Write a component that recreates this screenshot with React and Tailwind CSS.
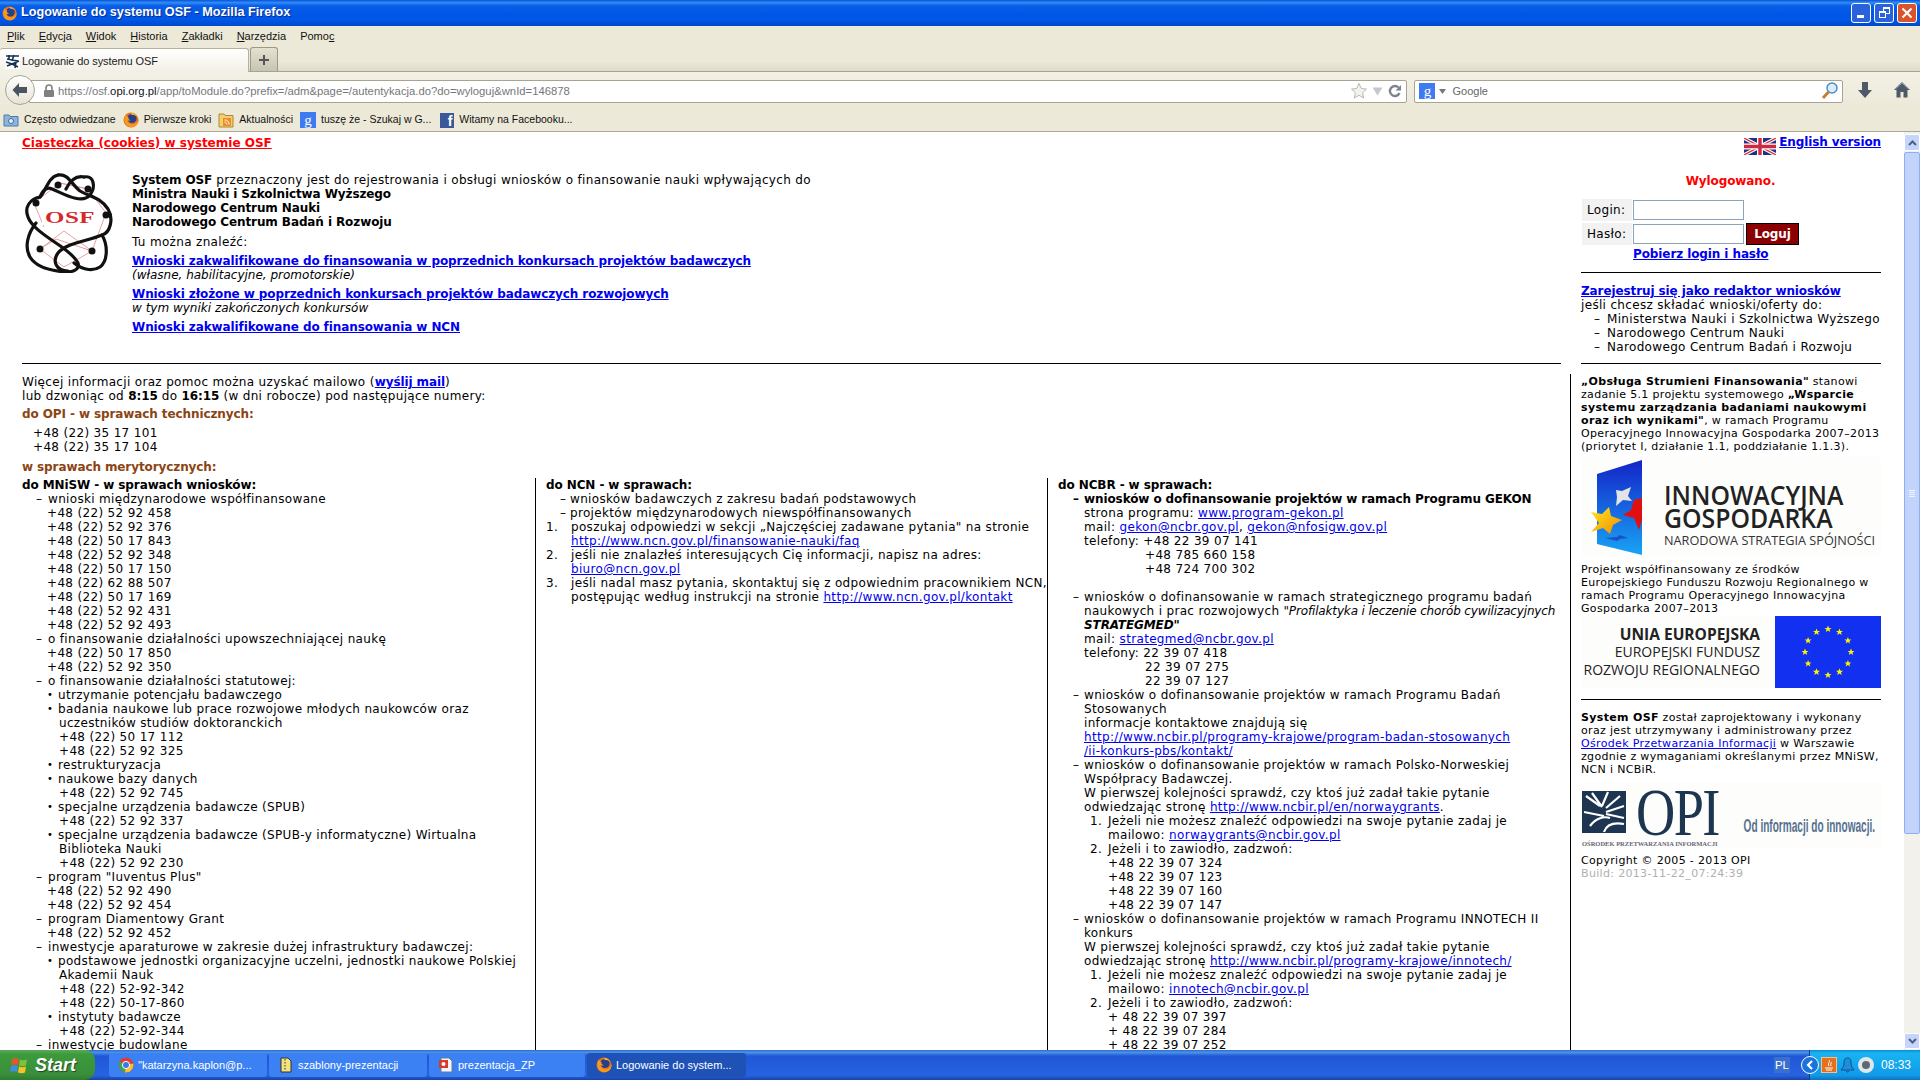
import React from 'react';

const Firefox = ({ size = 16 }) => (
  <svg width={size} height={size} viewBox="0 0 16 16" className="shrink-0">
    <circle cx="8" cy="8" r="7.5" fill="#e8701a" />
    <circle cx="9" cy="6.5" r="4.6" fill="#27408b" />
    <path d="M3 2.5C1 5 .8 9 2.5 12c2 3.3 7 4.2 10.3 1.8 2.4-1.8 3-4.4 2.7-6.8-.6 2.8-2.6 5-5.6 5.2C7 12.400 4.600 10.500 4.500 8c1 .8 2 .8 3 .3C6 7.500 5 6.500 5.500 5 4 4.800 3.300 3.800 3 2.500z" fill="#f59a1c" />
    <path d="M8 1c2.500 0 5 1.300 6.500 4-1.800-1.500-3.600-2.300-6-2.300z" fill="#f6c12b" />
  </svg>
);

const OsfMini = () => (
  <svg width="15" height="15" viewBox="0 0 15 15" className="shrink-0">
    <rect width="15" height="15" fill="#fff" />
    <path d="M1 2h13M2 5l11 2M1 8l6 2 7-3M2 12l5-2 6 3M4 1v5M9 1l-2 6M11 8l-1 6" stroke="#16324f" strokeWidth="1.600" fill="none" />
  </svg>
);

const GoogleIcon = ({ size = 16 }) => (
  <div style={{ width: size, height: size }} className="bg-[#3f7bf0] flex items-center justify-center text-white text-[15px] leading-none font-['Liberation_Serif',serif] shrink-0">g</div>
);

// ---- top window chrome ----

const TitleBar = () => (
  <div className="h-[26px] flex items-center pl-[2px] pr-[3px] bg-[linear-gradient(180deg,#0a52d8_0%,#2e8df7_10%,#0a5ee8_22%,#0056e6_55%,#0058e8_75%,#0048c8_100%)]">
    <Firefox size={15} />
    <span className="ml-[4px] text-white font-bold text-[12.7px] font-['Liberation_Sans',sans-serif] [text-shadow:1px_1px_0_#0a2c8c]">Logowanie do systemu OSF - Mozilla Firefox</span>
    <div className="ml-auto flex gap-[3px]">
      <div className="w-[20px] h-[20px] rounded-[3px] border border-white bg-[#2a62dc] flex items-end pl-[5px] pb-[4px]">
        <div className="w-[7px] h-[3px] bg-white" />
      </div>
      <div className="w-[20px] h-[20px] rounded-[3px] border border-white bg-[#2a62dc] relative">
        <div className="absolute left-[8px] top-[3px] w-[7px] h-[7px] border border-white border-t-2" />
        <div className="absolute left-[4px] top-[7px] w-[7px] h-[7px] border border-white border-t-2 bg-[#2a62dc]" />
      </div>
      <div className="w-[20px] h-[20px] rounded-[3px] border border-white bg-[#d9542b] flex items-center justify-center">
        <svg width="12" height="12" viewBox="0 0 12 12"><path d="M1.500 1.500l9 9M10.500 1.500l-9 9" stroke="#fff" strokeWidth="2" /></svg>
      </div>
    </div>
  </div>
);

const MenuBar = () => {
  const items = [['P', 'lik'], ['E', 'dycja'], ['W', 'idok'], ['H', 'istoria'], ['Z', 'akładki'], ['N', 'arzędzia'], ['Pomo', 'c']];
  return (
    <div className="h-[21px] flex items-center pl-[7px] gap-[14px] bg-[#ece9d8] text-[11px] text-[#111]">
      {items.map(([a, b], i) => (
        <span key={i} className="inline-block">
          {i === 6 ? <>{a}<u>{b}</u></> : <><u>{a}</u>{b}</>}
        </span>
      ))}
    </div>
  );
};

const TabBar = () => (
  <div className="h-[25px] flex items-end bg-[linear-gradient(180deg,#ece9d8_0%,#ece9d8_60%,#dfdbca_100%)] border-b border-[#a8a493]">
    <div className="w-[249px] h-[24px] -mb-px rounded-t-[3px] border border-b-0 border-[#b5b19f] border-l-0 bg-[linear-gradient(180deg,#ffffff,#f2f0e5)] flex items-center pl-[5px] pt-[1px] gap-[2px] text-[11px] tracking-[-0.1px] text-[#222]">
      <OsfMini />
      <span>Logowanie do systemu OSF</span>
    </div>
    <div className="ml-[1px] w-[28px] h-[24px] rounded-t-[3px] border border-b-0 border-[#9c9886] bg-[linear-gradient(180deg,#e4e1d2,#c8c4b2)] flex items-center justify-center">
      <svg width="12" height="12" viewBox="0 0 12 12"><path d="M6 1v10M1 6h10" stroke="#555" strokeWidth="2" /></svg>
    </div>
  </div>
);

const NavBar = () => (
  <div className="h-[36px] flex items-center pl-[5px] pr-[9px] bg-[linear-gradient(180deg,#f3f1e6,#ece9d8)] relative">
    <div className="w-[30px] h-[30px] rounded-full border border-[#a8a493] bg-[linear-gradient(180deg,#ffffff,#e6e3d6)] flex items-center justify-center z-10">
      <svg width="18" height="16" viewBox="0 0 18 16"><path d="M8 1L1.500 8 8 15v-4h8V5H8z" fill="#4a5560" /></svg>
    </div>
    <div className="-ml-[6px] mt-[2px] w-[1380px] h-[23px] bg-white border border-[#a8a493] rounded-r-[2px] flex items-center pl-[12px] pr-[4px]">
      <svg width="14" height="14" viewBox="0 0 14 14" className="shrink-0">
        <rect x="2" y="6" width="10" height="7" rx="1" fill="#808080" />
        <path d="M4 6.500V4a3 3 0 0 1 6 0v2.500" fill="none" stroke="#808080" strokeWidth="1.600" />
      </svg>
      <span className="ml-[2px] text-[11.3px] text-[#777] whitespace-nowrap">https://osf.<span className="text-[#111]">opi.org.pl</span>/app/toModule.do?prefix=/adm&amp;page=/autentykacja.do?do=wyloguj&amp;wnId=146878</span>
      <div className="ml-auto flex items-center gap-[4px]">
        <svg width="18" height="18" viewBox="0 0 18 18"><path d="M9 1.500l2.300 5 5.200.6-3.900 3.600 1.100 5.300L9 13.300 4.300 16l1.100-5.300L1.500 7.100l5.200-.6z" fill="#f2f2ee" stroke="#b8b8b4" /></svg>
        <svg width="11" height="9" viewBox="0 0 11 9"><path d="M.500 .500h10L5.500 8.500z" fill="#c4c8cc" /></svg>
        <svg width="14" height="14" viewBox="0 0 14 14" className="ml-[1px]"><path d="M11.500 9A5 5 0 1 1 10.500 3.500" fill="none" stroke="#7c8490" strokeWidth="2.400" /><path d="M13 1v5.500H7.500z" fill="#7c8490" /></svg>
      </div>
    </div>
    <div className="ml-[7px] mt-[2px] w-[429px] h-[23px] bg-white border border-[#a8a493] rounded-[2px] flex items-center pl-[4px] pr-[3px]">
      <GoogleIcon size={16} />
      <svg width="7" height="5" viewBox="0 0 7 5" className="ml-[4px]"><path d="M0 0h7L3.500 5z" fill="#777" /></svg>
      <span className="ml-[6px] text-[11px] text-[#666]">Google</span>
      <svg width="18" height="20" viewBox="0 0 18 20" className="ml-auto">
        <circle cx="11" cy="7" r="5" fill="#d8eefc" stroke="#4f8fc0" strokeWidth="1.500" />
        <path d="M7.500 11L2 17" stroke="#c97c2a" strokeWidth="3" />
      </svg>
    </div>
    <svg width="16" height="18" viewBox="0 0 16 18" className="ml-[14px]"><path d="M5 1h6v8h4l-7 8-7-8h4z" fill="#4e5a66" /></svg>
    <svg width="18" height="18" viewBox="0 0 18 18" className="ml-[20px]"><path d="M9 1L1 9h2.500v7.500h4V11h3v5.500h4V9H17z" fill="#4e5a66" /><path d="M3 7.500L9 2l6 5.500" fill="none" stroke="#8fa0b0" /></svg>
  </div>
);

const Bookmark = ({ icon, label, gap }) => (
  <div className="flex items-center" style={{ marginRight: gap }}>
    {icon}
    <span className="ml-[5px] whitespace-nowrap">{label}</span>
  </div>
);

const BookmarksBar = () => (
  <div className="h-[24px] flex items-center pl-[3px] pt-[1px] bg-[#ece9d8] border-b border-[#aca899] text-[10.5px] text-[#111]">
    <Bookmark gap={7} label="Często odwiedzane" icon={
      <svg width="16" height="16" viewBox="0 0 16 16"><path d="M1 3h5l1 1.500h8V14H1z" fill="#8cb4dc" stroke="#4a7aa8" /><circle cx="8" cy="9" r="2.500" fill="#e8f2fa" stroke="#3a6a98" /></svg>
    } />
    <Bookmark gap={7} label="Pierwsze kroki" icon={<Firefox size={16} />} />
    <Bookmark gap={7} label="Aktualności" icon={
      <svg width="16" height="16" viewBox="0 0 16 16"><path d="M1 2h5l1 1.500h8V15H1z" fill="#f2d070" stroke="#a88a30" /><rect x="5" y="6" width="8" height="8" fill="#f08a24" /><path d="M6.500 8a4 4 0 0 1 4.500 4.500M6.500 10.200a2 2 0 0 1 2.300 2.300" stroke="#fff" fill="none" /></svg>
    } />
    <Bookmark gap={9} label="tuszę że - Szukaj w G..." icon={<GoogleIcon size={16} />} />
    <Bookmark gap={0} label="Witamy na Facebooku..." icon={
      <div className="w-[14px] h-[15px] bg-[#3b5998] text-white font-bold text-[14px] leading-[17px] text-right pr-[2px] font-['Liberation_Sans',sans-serif]">f</div>
    } />
  </div>
);

// ---- page content ----

const L = ({ className = '', children }) => (
  <div className={`h-[14px] leading-[14px] whitespace-nowrap ${className}`}>{children}</div>
);

const A = ({ bold, children }) => (
  <a href="#" className={`text-[#0000ee] underline ${bold ? 'font-bold' : ''}`}>{children}</a>
);

// "-" item of the first column
const Dash = ({ children }) => (
  <L className="pl-[14px] flex"><span className="w-[12px]">–</span><span>{children}</span></L>
);
const Phone = ({ children }) => <L className="pl-[25px]">{children}</L>;
const Bullet = ({ children }) => (
  <L className="pl-[25px] flex"><span className="w-[11px] text-[10px]">•</span><span>{children}</span></L>
);
const Sub = ({ children }) => <L className="pl-[37px]">{children}</L>;

const MniswColumn = () => (
  <div>
    <L className="font-bold">do MNiSW - w sprawach wniosków:</L>
    <Dash>wnioski międzynarodowe współfinansowane</Dash>
    {['52 92 458', '52 92 376', '50 17 843', '52 92 348', '50 17 150', '62 88 507', '50 17 169', '52 92 431', '52 92 493'].map((n) => (
      <Phone key={n}>+48 (22) {n}</Phone>
    ))}
    <Dash>o finansowanie działalności upowszechniającej naukę</Dash>
    <Phone>+48 (22) 50 17 850</Phone>
    <Phone>+48 (22) 52 92 350</Phone>
    <Dash>o finansowanie działalności statutowej:</Dash>
    <Bullet>utrzymanie potencjału badawczego</Bullet>
    <Bullet>badania naukowe lub prace rozwojowe młodych naukowców oraz</Bullet>
    <Sub>uczestników studiów doktoranckich</Sub>
    <Sub>+48 (22) 50 17 112</Sub>
    <Sub>+48 (22) 52 92 325</Sub>
    <Bullet>restrukturyzacja</Bullet>
    <Bullet>naukowe bazy danych</Bullet>
    <Sub>+48 (22) 52 92 745</Sub>
    <Bullet>specjalne urządzenia badawcze (SPUB)</Bullet>
    <Sub>+48 (22) 52 92 337</Sub>
    <Bullet>specjalne urządzenia badawcze (SPUB-y informatyczne) Wirtualna</Bullet>
    <Sub>Biblioteka Nauki</Sub>
    <Sub>+48 (22) 52 92 230</Sub>
    <Dash>program "Iuventus Plus"</Dash>
    <Phone>+48 (22) 52 92 490</Phone>
    <Phone>+48 (22) 52 92 454</Phone>
    <Dash>program Diamentowy Grant</Dash>
    <Phone>+48 (22) 52 92 452</Phone>
    <Dash>inwestycje aparaturowe w zakresie dużej infrastruktury badawczej:</Dash>
    <Bullet>podstawowe jednostki organizacyjne uczelni, jednostki naukowe Polskiej</Bullet>
    <Sub>Akademii Nauk</Sub>
    <Sub>+48 (22) 52-92-342</Sub>
    <Sub>+48 (22) 50-17-860</Sub>
    <Bullet>instytuty badawcze</Bullet>
    <Sub>+48 (22) 52-92-344</Sub>
    <Dash>inwestycje budowlane</Dash>
  </div>
);

const NcnColumn = () => {
  const Num = ({ n, children }) => (
    <L className="flex"><span className="w-[25px]">{n}</span><span>{children}</span></L>
  );
  return (
    <div className="border-l border-black pl-[10px] h-full">
      <L className="font-bold">do NCN - w sprawach:</L>
      <L className="pl-[14px] flex"><span className="w-[10px]">–</span><span>wniosków badawczych z zakresu badań podstawowych</span></L>
      <L className="pl-[14px] flex"><span className="w-[10px]">–</span><span>projektów międzynarodowych niewspółfinansowanych</span></L>
      <Num n="1.">poszukaj odpowiedzi w sekcji „Najczęściej zadawane pytania" na stronie</Num>
      <L className="pl-[25px]"><A>http://www.ncn.gov.pl/finansowanie-nauki/faq</A></L>
      <Num n="2.">jeśli nie znalazłeś interesujących Cię informacji, napisz na adres:</Num>
      <L className="pl-[25px]"><A>biuro@ncn.gov.pl</A></L>
      <Num n="3.">jeśli nadal masz pytania, skontaktuj się z odpowiednim pracownikiem NCN,</Num>
      <L className="pl-[25px]">postępując według instrukcji na stronie <A>http://www.ncn.gov.pl/kontakt</A></L>
    </div>
  );
};

const NcbrDash = ({ bold, children }) => (
  <L className={`pl-[15px] flex ${bold ? 'font-bold' : ''}`}><span className="w-[11px]">–</span><span>{children}</span></L>
);
const In = ({ children }) => <L className="pl-[26px]">{children}</L>;
const Step = ({ n, children }) => (
  <L className="pl-[32px] flex"><span className="w-[18px]">{n}</span><span>{children}</span></L>
);
const Deep = ({ children }) => <L className="pl-[50px]">{children}</L>;
const Tel = ({ children }) => <L className="pl-[87px]">{children}</L>;

const NcbrColumn = () => (
  <div className="border-l border-black pl-[10px] h-full">
    <L className="font-bold">do NCBR - w sprawach:</L>
    <NcbrDash bold>wniosków o dofinansowanie projektów w ramach Programu GEKON</NcbrDash>
    <In>strona programu: <A>www.program-gekon.pl</A></In>
    <In>mail: <A>gekon@ncbr.gov.pl</A>, <A>gekon@nfosigw.gov.pl</A></In>
    <In>telefony: +48 22 39 07 141</In>
    <Tel>+48 785 660 158</Tel>
    <Tel>+48 724 700 302</Tel>
    <L />
    <NcbrDash>wniosków o dofinansowanie w ramach strategicznego programu badań</NcbrDash>
    <In>naukowych i prac rozwojowych <i className="tracking-[-0.15px]">"Profilaktyka i leczenie chorób cywilizacyjnych</i></In>
    <In><b><i>STRATEGMED"</i></b></In>
    <In>mail: <A>strategmed@ncbr.gov.pl</A></In>
    <In>telefony: 22 39 07 418</In>
    <Tel>22 39 07 275</Tel>
    <Tel>22 39 07 127</Tel>
    <NcbrDash>wniosków o dofinansowanie projektów w ramach Programu Badań</NcbrDash>
    <In>Stosowanych</In>
    <In>informacje kontaktowe znajdują się</In>
    <In><A>http://www.ncbir.pl/programy-krajowe/program-badan-stosowanych</A></In>
    <In><A>/ii-konkurs-pbs/kontakt/</A></In>
    <NcbrDash>wniosków o dofinansowanie projektów w ramach Polsko-Norweskiej</NcbrDash>
    <In>Współpracy Badawczej.</In>
    <In>W pierwszej kolejności sprawdź, czy ktoś już zadał takie pytanie</In>
    <In>odwiedzając stronę <A>http://www.ncbir.pl/en/norwaygrants</A>.</In>
    <Step n="1.">Jeżeli nie możesz znaleźć odpowiedzi na swoje pytanie zadaj je</Step>
    <Deep>mailowo: <A>norwaygrants@ncbir.gov.pl</A></Deep>
    <Step n="2.">Jeżeli i to zawiodło, zadzwoń:</Step>
    <Deep>+48 22 39 07 324</Deep>
    <Deep>+48 22 39 07 123</Deep>
    <Deep>+48 22 39 07 160</Deep>
    <Deep>+48 22 39 07 147</Deep>
    <NcbrDash>wniosków o dofinansowanie projektów w ramach Programu INNOTECH II</NcbrDash>
    <In>konkurs</In>
    <In>W pierwszej kolejności sprawdź, czy ktoś już zadał takie pytanie</In>
    <In>odwiedzając stronę <A>http://www.ncbir.pl/programy-krajowe/innotech/</A></In>
    <Step n="1.">Jeżeli nie możesz znaleźć odpowiedzi na swoje pytanie zadaj je</Step>
    <Deep>mailowo: <A>innotech@ncbir.gov.pl</A></Deep>
    <Step n="2.">Jeżeli i to zawiodło, zadzwoń:</Step>
    <Deep>+ 48 22 39 07 397</Deep>
    <Deep>+ 48 22 39 07 284</Deep>
    <Deep>+ 48 22 39 07 252</Deep>
  </div>
);

const OsfLogo = () => (
  <svg width="94" height="100" viewBox="0 0 94 100" className="shrink-0">
    <g stroke="#e08a8a" strokeWidth="0.8" fill="none">
      <path d="M38 10L66 16 84 40 70 78 42 94 18 76 34 66 70 78M38 10L12 30 22 54M18 76L42 58 70 78M38 10L66 16" />
    </g>
    <g stroke="#111" strokeWidth="3.200" fill="none" strokeLinecap="round">
      <path d="M36 2C26 4 24 18 18 24 8 26 2 34 6 44c3 9 16 18 28 26 12 8 20 16 22 20 2 6-4 9-12 9C30 98 14 94 8 84 2 74 6 60 14 50" />
      <path d="M36 2C46 0 50 12 58 18c10 6 20 6 28 18 6 10 2 24-6 26-14 6-36 8-44 18-6 8-2 18 10 18" />
      <path d="M62 4C72 2 74 14 68 22 60 32 40 20 30 16 22 12 18 24 18 24" />
      <path d="M62 4C52 2 46 12 44 16M80 62c6 10 6 26-2 32-6 4-16 4-26-4" />
    </g>
    <g fill="#111">
      <circle cx="36" cy="12" r="3.500" /><circle cx="66" cy="16" r="3.500" /><circle cx="84" cy="42" r="3.500" />
      <circle cx="70" cy="78" r="3.500" /><circle cx="18" cy="76" r="3.500" /><circle cx="14" cy="30" r="3.500" />
    </g>
    <rect x="20" y="36" width="56" height="16" fill="#fff" />
    <text x="48" y="50" textAnchor="middle" fontFamily="Liberation Serif, serif" fontWeight="bold" fontSize="17" fill="#d42a2a" textLength="50" lengthAdjust="spacingAndGlyphs">OSF</text>
  </svg>
);

const LeftPane = () => (
  <div className="w-[1570px] shrink-0 pl-[22px] pt-[3px] flex flex-col h-full [&_b]:tracking-[-0.1px] [&_.font-bold]:tracking-[-0.1px]">
    <L className="pt-[1px]"><a href="#" className="text-[#ff0000] font-[700] tracking-[0px] underline">Ciasteczka (cookies) w systemie OSF</a></L>
    <div className="mt-[24px] flex">
      <div className="w-[110px] shrink-0"><OsfLogo /></div>
      <div>
        <L><b>System OSF</b> przeznaczony jest do rejestrowania i obsługi wniosków o finansowanie nauki wpływających do</L>
        <L className="font-bold">Ministra Nauki i Szkolnictwa Wyższego</L>
        <L className="font-bold">Narodowego Centrum Nauki</L>
        <L className="font-bold">Narodowego Centrum Badań i Rozwoju</L>
        <L className="mt-[6px]">Tu można znaleźć:</L>
        <L className="mt-[5px]"><A bold>Wnioski zakwalifikowane do finansowania w poprzednich konkursach projektów badawczych</A></L>
        <L className="italic tracking-[0px]">(własne, habilitacyjne, promotorskie)</L>
        <L className="mt-[5px]"><A bold>Wnioski złożone w poprzednich konkursach projektów badawczych rozwojowych</A></L>
        <L className="italic tracking-[0px]">w tym wyniki zakończonych konkursów</L>
        <L className="mt-[5px]"><A bold>Wnioski zakwalifikowane do finansowania w NCN</A></L>
      </div>
    </div>
    <div className="mt-[29px] mr-[9px] h-px bg-black" />
    <L className="mt-[11px]">Więcej informacji oraz pomoc można uzyskać mailowo (<A bold>wyślij mail</A>)</L>
    <L>lub dzwoniąc od <b>8:15</b> do <b>16:15</b> (w dni robocze) pod następujące numery:</L>
    <L className="mt-[4px] font-bold text-[#8b4513]">do OPI - w sprawach technicznych:</L>
    <L className="mt-[5px] pl-[11px]">+48 (22) 35 17 101</L>
    <L className="pl-[11px]">+48 (22) 35 17 104</L>
    <L className="mt-[6px] font-bold text-[#8b4513]">w sprawach merytorycznych:</L>
    <div className="mt-[4px] grid grid-cols-[513px_512px_1fr] flex-1 min-h-0">
      <MniswColumn />
      <NcnColumn />
      <NcbrColumn />
    </div>
  </div>
);

const UkFlag = () => (
  <svg width="32" height="17" viewBox="0 0 32 17" className="shrink-0">
    <rect width="32" height="17" fill="#26307e" />
    <path d="M0 0l32 17M32 0L0 17" stroke="#fff" strokeWidth="3.500" />
    <path d="M0 0l32 17M32 0L0 17" stroke="#d0283c" strokeWidth="1.200" />
    <path d="M16 0v17M0 8.500h32" stroke="#fff" strokeWidth="6" />
    <path d="M16 0v17M0 8.500h32" stroke="#d0283c" strokeWidth="3.400" />
  </svg>
);

const LoginForm = () => (
  <div className="mt-[11px] ml-[1px] grid grid-cols-[50px_112px_auto] gap-x-[1px] gap-y-[2px] items-stretch">
    <div className="h-[22px] bg-[#f2f2f2] pl-[5px] flex items-center">Login:</div>
    <div className="h-[22px] py-px"><div className="h-[20px] w-[111px] border border-[#8aa4bc] bg-white" /></div>
    <div />
    <div className="h-[22px] bg-[#f2f2f2] pl-[5px] flex items-center">Hasło:</div>
    <div className="h-[22px] py-px"><div className="h-[20px] w-[111px] border border-[#8aa4bc] bg-white" /></div>
    <div className="w-[53px] h-[22px] bg-[#8b0000] border border-black text-white font-bold flex items-center justify-center">Loguj</div>
    <div />
    <div className="col-span-2 leading-[14px] whitespace-nowrap"><A bold>Pobierz login i hasło</A></div>
  </div>
);

const FundsEmblem = () => (
  <svg width="62" height="96" viewBox="0 0 62 96" className="shrink-0">
    <defs>
      <linearGradient id="fe" x1="0" y1="0" x2="0" y2="1"><stop offset="0" stopColor="#1424c8" /><stop offset="1" stopColor="#18a4f4" /></linearGradient>
      <linearGradient id="fy" x1="0" y1="0" x2="1" y2="1"><stop offset="0" stopColor="#ffe820" /><stop offset="1" stopColor="#f08a00" /></linearGradient>
    </defs>
    <path d="M14 14L59 0V95L14 84z" fill="url(#fe)" />
    <path d="M33 30l6 1 9-4-3 9 4 5-9-1-7 6 1-9z" fill="#e4e4e8" />
    <path d="M59 38v22l-3 10-5-12-11-3 8-5 3-10z" fill="#e01010" />
    <path d="M26 47l2 9 11 4-9 5-3 9-7-6-12 4 8-9-8-11 11 2z" fill="url(#fy)" />
    <path d="M22 78l12-1 3-2 8 3-8 1-3 2z" fill="#1c50c8" />
  </svg>
);

const InnovationLogo = () => (
  <div className="mt-[4px] h-[100px] flex items-start bg-[#fdfdfc] text-[#222] font-['Open_Sans',sans-serif] tracking-[0px]">
    <div className="ml-[2px] mt-[3px]"><FundsEmblem /></div>
    <div className="ml-[19px] mt-[26px] flex flex-col">
      <div className="text-[24.8px] leading-[23px] font-semibold scale-y-[1.1]">INNOWACYJNA</div>
      <div className="text-[24.8px] leading-[23px] font-semibold scale-y-[1.1]">GOSPODARKA</div>
      <div className="text-[12.7px] leading-[23px] text-[#333] whitespace-nowrap">NARODOWA STRATEGIA SPÓJNOŚCI</div>
    </div>
  </div>
);

const EuStars = () => {
  const stars = [];
  for (let i = 0; i < 12; i++) {
    const a = (i * Math.PI) / 6;
    stars.push(<polygon key={i} transform={`translate(${53 + 23 * Math.sin(a)} ${36 - 23 * Math.cos(a)})`} points="0,-3.600 1,-1.100 3.500,-1.100 1.500,.5 2.200,3 0,1.500 -2.200,3 -1.500,.5 -3.500,-1.100 -1,-1.100" fill="#fff200" />);
  }
  return (
    <svg width="106" height="72" viewBox="0 0 106 72" className="shrink-0">
      <rect width="106" height="72" fill="#1230f0" />
      {stars}
    </svg>
  );
};

const EuLogo = () => (
  <div className="mt-[1px] h-[72px] flex items-center justify-between bg-[#fdfdfc] text-[#222] font-['Open_Sans',sans-serif]">
    <div className="w-[179px] text-right whitespace-nowrap text-[14px] leading-[18px] tracking-[0px]">
      <div className="font-bold text-[15.5px]">UNIA EUROPEJSKA</div>
      <div>EUROPEJSKI FUNDUSZ</div>
      <div>ROZWOJU REGIONALNEGO</div>
    </div>
    <EuStars />
  </div>
);

const OpiLogo = () => (
  <div className="mt-[6px] h-[66px] flex bg-[#fdfdfb] relative tracking-[0px]">
    <div className="flex flex-col pt-[7px] pl-[1px]">
      <div className="flex items-center">
        <svg width="44" height="44" viewBox="0 0 44 44" className="shrink-0">
          <rect y="1" width="44" height="42" fill="#1d3550" />
          <path d="M4 6l14 10M10 3l10 14M26 2l-6 14M38 6L24 18M42 16L24 22M2 22l20 4M42 28L24 24M8 36c6-8 14-10 20-8M22 42c2-6 8-10 20-8" stroke="#fff" strokeWidth="2.200" fill="none" />
        </svg>
        <div className="ml-[10px] text-[#1d3550] font-['Liberation_Serif',serif] text-[68px] leading-[46px] tracking-[-2px] scale-x-[0.8] origin-left">OPI</div>
      </div>
      <div className="mt-[4px] text-[6.5px] leading-[9px] font-['Liberation_Serif',serif] text-[#667] font-bold whitespace-nowrap">OŚRODEK PRZETWARZANIA INFORMACJI</div>
    </div>
    <div className="absolute right-[6px] top-[35px] text-[#56708f] font-['Liberation_Sans',sans-serif] font-bold text-[19px] leading-[18px] whitespace-nowrap scale-x-[0.53] origin-right">Od informacji do innowacji.</div>
  </div>
);

const RightPane = () => (
  <div className="flex-1 min-w-0 flex flex-col h-full">
    <div className="ml-[11px] w-[300px] pt-[3px] [&_.font-bold]:tracking-[-0.1px]">
      <div className="h-[14px] flex justify-end items-start gap-[3px] leading-[14px]">
        <div className="mt-[3px]"><UkFlag /></div>
        <A bold>English version</A>
      </div>
      <div className="mt-[25px] h-[14px] leading-[14px] text-center text-[#ff0000] font-bold pr-[1px]">Wylogowano.</div>
      <LoginForm />
      <div className="mt-[11px] h-px bg-black" />
      <L className="mt-[11px]"><A bold>Zarejestruj się jako redaktor wniosków</A></L>
      <L>jeśli chcesz składać wnioski/oferty do:</L>
      <L className="pl-[13px] flex"><span className="w-[13px]">–</span><span>Ministerstwa Nauki i Szkolnictwa Wyższego</span></L>
      <L className="pl-[13px] flex"><span className="w-[13px]">–</span><span>Narodowego Centrum Nauki</span></L>
      <L className="pl-[13px] flex"><span className="w-[13px]">–</span><span>Narodowego Centrum Badań i Rozwoju</span></L>
      <div className="mt-[9px] h-px bg-black" />
    </div>
    <div className="mt-[10px] flex-1 border-l border-black pl-[10px] w-[311px] text-[11px] leading-[13px]">
      <div className="whitespace-nowrap pt-[1px]">
        <div><b>„Obsługa Strumieni Finansowania"</b> stanowi</div>
        <div>zadanie 5.1 projektu systemowego <b>„Wsparcie</b></div>
        <div><b>systemu zarządzania badaniami naukowymi</b></div>
        <div><b>oraz ich wynikami"</b>, w ramach Programu</div>
        <div>Operacyjnego Innowacyjna Gospodarka 2007–2013</div>
        <div>(priorytet I, działanie 1.1, poddziałanie 1.1.3).</div>
      </div>
      <InnovationLogo />
      <div className="mt-[6px] whitespace-nowrap">
        <div>Projekt współfinansowany ze środków</div>
        <div>Europejskiego Funduszu Rozwoju Regionalnego w</div>
        <div>ramach Programu Operacyjnego Innowacyjna</div>
        <div>Gospodarka 2007–2013</div>
      </div>
      <EuLogo />
      <div className="mt-[11px] h-px bg-black" />
      <div className="mt-[11px] whitespace-nowrap">
        <div><b>System OSF</b> został zaprojektowany i wykonany</div>
        <div>oraz jest utrzymywany i administrowany przez</div>
        <div><A>Ośrodek Przetwarzania Informacji</A> w Warszawie</div>
        <div>zgodnie z wymaganiami określanymi przez MNiSW,</div>
        <div>NCN i NCBiR.</div>
      </div>
      <OpiLogo />
      <div className="mt-[6px] whitespace-nowrap">Copyright © 2005 - 2013 OPI</div>
      <div className="whitespace-nowrap text-[#b0b0b0]">Build: 2013-11-22_07:24:39</div>
    </div>
  </div>
);

const Scrollbar = () => (
  <div className="w-[16px] shrink-0 h-full bg-[#f3f1ec] flex flex-col pt-[2px] pb-[1px]">
    <div className="h-[17px] rounded-[2px] border border-white bg-[#c6d5fb] flex items-center justify-center">
      <svg width="9" height="6" viewBox="0 0 9 6"><path d="M1 5l3.500-3.500L8 5" stroke="#4d6185" strokeWidth="2" fill="none" /></svg>
    </div>
    <div className="mt-[1px] h-[682px] rounded-[2px] border border-[#8fb0f0] bg-[#c2d3fc] flex items-center justify-center">
      <div className="flex flex-col gap-[1px]">
        {[0, 1, 2, 3].map((i) => <div key={i} className="w-[6px] h-px bg-[#eef3ff]" />)}
      </div>
    </div>
    <div className="mt-auto h-[16px] rounded-[2px] border border-white bg-[#c6d5fb] flex items-center justify-center">
      <svg width="9" height="6" viewBox="0 0 9 6"><path d="M1 1l3.500 3.500L8 1" stroke="#4d6185" strokeWidth="2" fill="none" /></svg>
    </div>
  </div>
);

// ---- taskbar ----

const Task = ({ icon, label, active, width }) => (
  <div
    style={{ width }}
    className={`h-[24px] flex items-center pl-[9px] gap-[4px] rounded-[3px] text-white text-[11px] whitespace-nowrap ${active ? 'bg-[#1e52b7]' : 'bg-[#3c81f3]'}`}
  >
    {icon}
    <span>{label}</span>
  </div>
);

const Taskbar = () => (
  <div className="h-[30px] flex items-center bg-[linear-gradient(180deg,#3168d5_0%,#4993e6_8%,#2157d7_20%,#2663e0_85%,#1941a5_100%)] font-['Liberation_Sans',sans-serif]">
    <div className="w-[95px] h-full rounded-r-[10px] bg-[linear-gradient(180deg,#5da85a_0%,#3c9a3c_15%,#3a8f3a_80%,#2f7a30_100%)] flex items-center pl-[10px] gap-[5px] shrink-0">
      <svg width="20" height="20" viewBox="0 0 20 20">
        <path d="M2 4c2-1 5-1 7 0l-1 6c-2-1-5-1-7 0z" fill="#e8552c" />
        <path d="M10 4.500c2 1 5 1 7 0l-1 6c-2 1-5 1-7 0z" fill="#7cc142" />
        <path d="M1 11c2-1 5-1 7 0l-1 6c-2-1-5-1-7 0z" fill="#3f8fe0" />
        <path d="M9 11.500c2 1 5 1 7 0l-1 6c-2 1-5 1-7 0z" fill="#f6c61e" />
      </svg>
      <span className="text-white italic font-bold text-[18px] [text-shadow:1px_1px_1px_#1a4a1a]">Start</span>
    </div>
    <div className="ml-[14px] flex gap-[2px]">
      <Task width={158} label={'"katarzyna.kaplon@p...'} icon={
        <svg width="16" height="16" viewBox="0 0 16 16">
          <circle cx="8" cy="8" r="7.500" fill="#e03c31" />
          <path d="M8 8L1.500 4.500A7.500 7.500 0 0 0 7 15.400z" fill="#3aa757" />
          <path d="M8 8l7.200-1.600A7.500 7.500 0 0 1 7 15.400z" fill="#fbc02d" />
          <circle cx="8" cy="8" r="3.600" fill="#3b78e7" stroke="#fff" />
        </svg>
      } />
      <Task width={158} label="szablony-prezentacji" icon={
        <svg width="16" height="16" viewBox="0 0 16 16"><path d="M3 1h7l3 3v11H3z" fill="#f6e27a" stroke="#333" /><path d="M7 2v11" stroke="#333" strokeDasharray="1.500 1.500" /></svg>
      } />
      <Task width={156} label="prezentacja_ZP" icon={
        <svg width="16" height="16" viewBox="0 0 16 16"><path d="M3 1h8l3 3v11H3z" fill="#f4f6fa" stroke="#6a7a90" /><rect x="1" y="3" width="9" height="8" fill="#d63a2a" /><circle cx="5.500" cy="7" r="2" fill="#fff" /></svg>
      } />
      <Task width={159} active label="Logowanie do system..." icon={<Firefox size={16} />} />
    </div>
    <div className="ml-auto mr-[19px] w-[16px] h-[16px] bg-[#3a6fd0] text-white text-[11.500px] leading-[16px] text-center">PL</div>
    <div className="relative w-[111px] h-full shrink-0 bg-[linear-gradient(180deg,#0c8ad8_0%,#19b4f0_10%,#109ae8_85%,#0f6fc0_100%)] border-l border-[#103a80] flex items-center text-white text-[12px]">
      <div className="absolute -left-[9px] top-[6px] w-[18px] h-[18px] rounded-full border border-white bg-[#1a72dc] flex items-center justify-center">
        <svg width="8" height="10" viewBox="0 0 8 10"><path d="M6 1L2 5l4 4" stroke="#fff" strokeWidth="2.200" fill="none" /></svg>
      </div>
      <div className="ml-[11px] w-[16px] h-[16px] bg-[#e8701a] border border-[#f8c090] flex items-center justify-center shrink-0">
        <svg width="12" height="12" viewBox="0 0 12 12"><path d="M2 9h8M3 11h6M6 1c2 2-2 3 0 6M8 3c1 1-1 2 0 4" stroke="#fff" fill="none" /></svg>
      </div>
      <svg width="15" height="16" viewBox="0 0 15 16" className="ml-[3px] shrink-0"><path d="M7.500 1C4 1 4 4 4 7c0 3-2 4-3 6h13c-1-2-3-3-3-6s0-6-3.500-6zM6 14c.5 1.300 2.500 1.300 3 0" fill="#1f8ed8" stroke="#0f4f90" /></svg>
      <div className="ml-[3px] w-[16px] h-[16px] rounded-full bg-[#dfe6ec] flex items-center justify-center shrink-0"><div className="w-[8px] h-[8px] rounded-full bg-[#5d6872]" /></div>
      <span className="ml-[7px]">08:33</span>
    </div>
  </div>
);

export default function App() {
  return (
    <div className="w-[1920px] h-[1080px] flex flex-col overflow-hidden bg-white font-['Liberation_Sans',sans-serif]">
      <TitleBar />
      <MenuBar />
      <TabBar />
      <NavBar />
      <BookmarksBar />
      <div className="h-[918px] flex overflow-hidden bg-white text-black text-[12px] leading-[14px] tracking-[0.33px] font-['DejaVu_Sans',sans-serif]">
        <LeftPane />
        <RightPane />
        <Scrollbar />
      </div>
      <Taskbar />
    </div>
  );
}
